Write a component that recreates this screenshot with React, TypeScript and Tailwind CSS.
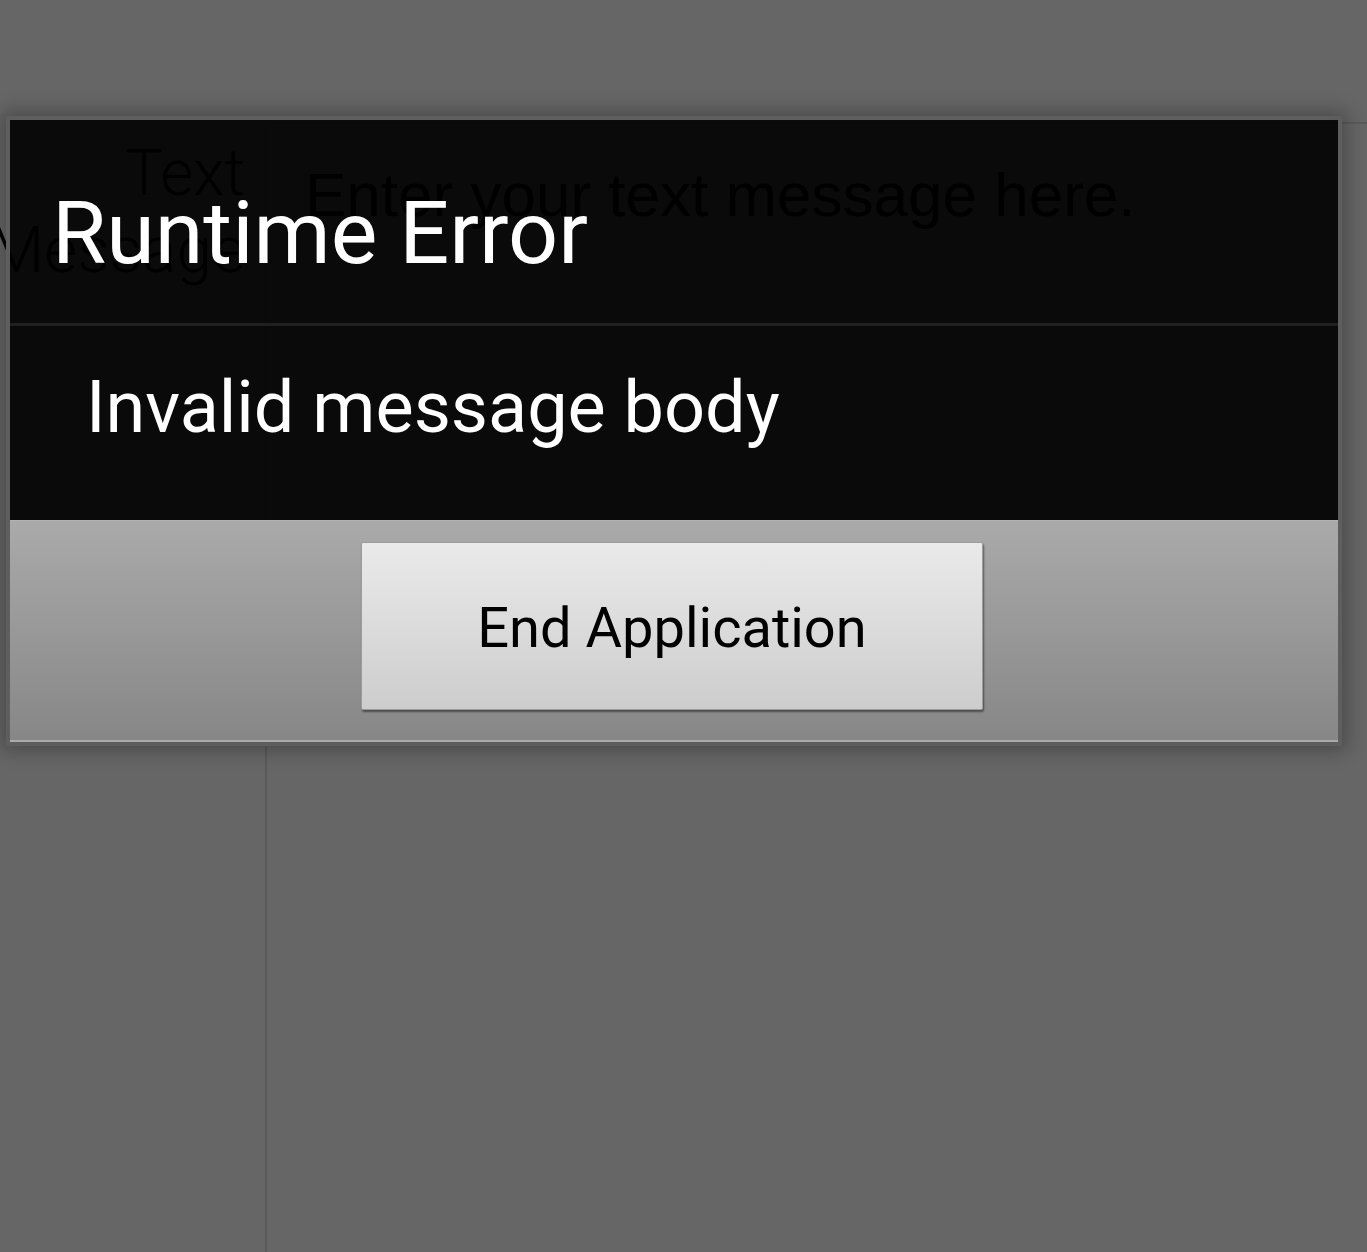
import React from "react";

export default function App() {
  return (
    <div className="relative h-[1252px] w-full overflow-hidden bg-[#666666] font-['Roboto',sans-serif]">
      {/* page behind the dialog */}
      <div className="flex h-full pt-[122px]">
        <div className="flex w-[265px] shrink-0 flex-col items-end pr-[20px] pt-[13px] text-[64px] font-light leading-[77px] text-black">
          <span className="whitespace-nowrap">Text</span>
          <span className="whitespace-nowrap">Message</span>
        </div>
        <div className="flex-1 border-l-2 border-t-2 border-[#5a5a5a] pl-[38px] pt-[36px] font-['Liberation_Sans',sans-serif] text-[62px] leading-[70px] text-black">
          Enter your text message here.
        </div>
      </div>

      {/* dialog overlay */}
      <div className="absolute left-[6px] top-[116px] w-[1336px] rounded-[3px] border-4 border-[#5e5e5e] shadow-[0_0_18px_6px_rgba(0,0,0,0.25)]">
        <div className="h-[203px] bg-black/90 pl-[42px] pt-[69px] text-[88px] leading-[88px] text-white">
          Runtime Error
        </div>
        <div className="h-[3px] bg-[#202020]" />
        <div className="h-[194px] bg-black/90 pl-[76px] pt-[46px] text-[72px] leading-[72px] text-white">
          Invalid message body
        </div>
        <div className="h-[222px] border-b-2 border-t border-b-[#ababab] border-t-[#b3b3b3] bg-gradient-to-b from-[#aaaaaa] to-[#878787] pl-[351px] pt-[21px]">
          <div className="flex h-[168px] w-[622px] items-center justify-center rounded-[2px] border border-[#9c9c9c] bg-gradient-to-b from-[#eaeaea] to-[#cdcdcd] pt-[4px] text-[56px] text-black shadow-[1px_2px_2px_rgba(0,0,0,0.45)]">
            End Application
          </div>
        </div>
      </div>
    </div>
  );
}
